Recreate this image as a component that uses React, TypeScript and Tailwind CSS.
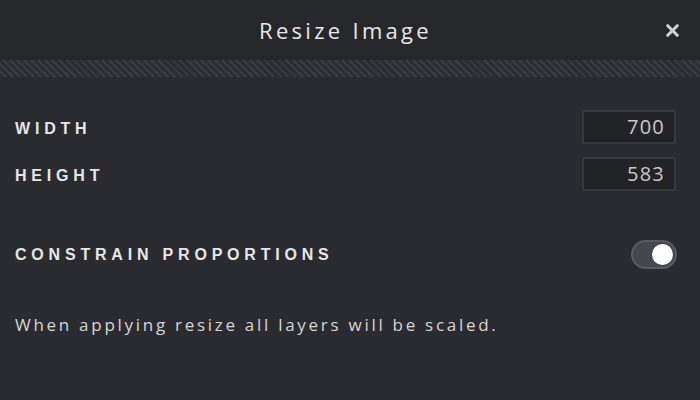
import { X } from 'lucide-react';

function NumberField({ value }: { value: string }) {
  return (
    <div className="flex h-[34px] w-[94px] items-center justify-end rounded-[2px] border-2 border-[#37383d] bg-[#222327] pr-[9px] text-[20px] tracking-[0.06em] text-[#c9c9c9] [font-family:'Open_Sans',sans-serif]">
      {value}
    </div>
  );
}

function Toggle({ on }: { on: boolean }) {
  return (
    <div className="flex h-[29px] w-[46px] items-center rounded-full border-2 border-[#5a5b60] bg-[#46474c] px-[2px]">
      <div className={`h-[21px] w-[21px] rounded-full bg-white ${on ? 'ml-auto' : ''}`} />
    </div>
  );
}

export default function App() {
  const label = "text-[16px] font-bold tracking-[0.3em] text-[#e6e6e6] [font-family:'Liberation_Sans',sans-serif]";

  return (
    <div className="flex h-[400px] w-[700px] flex-col bg-[#2a2b30]">
      {/* title bar */}
      <div className="relative flex h-[60px] items-center justify-center bg-[#26272b]">
        <h1 className="pr-[9px] text-[22px] tracking-[0.15em] text-[#e8e8e8] [font-family:'Open_Sans',sans-serif]">
          Resize Image
        </h1>
        <button className="absolute right-[18px] top-[21px] text-[#cfcfcf]">
          <X size={19} strokeWidth={4} />
        </button>
      </div>
      <div className="h-[17px] bg-[repeating-linear-gradient(45deg,#2c2d32_0px,#2c2d32_3px,#3b3c41_3px,#3b3c41_5px)]" />

      {/* form */}
      <div className="flex flex-col pl-[15px] pr-[24px] pt-[33px]">
        <div className="flex items-center justify-between">
          <span className={`${label} pt-[3px]`}>WIDTH</span>
          <NumberField value="700" />
        </div>
        <div className="mt-[13px] flex items-center justify-between">
          <span className={`${label} pt-[3px]`}>HEIGHT</span>
          <NumberField value="583" />
        </div>
        <div className="mt-[49px] flex items-center justify-between">
          <span className={label}>CONSTRAIN PROPORTIONS</span>
          <div className="-mr-[1px]">
            <Toggle on />
          </div>
        </div>
        <p className="mt-[43px] text-[17px] tracking-[0.16em] text-[#d6d6d6] [font-family:'Open_Sans',sans-serif]">
          When applying resize all layers will be scaled.
        </p>
      </div>
    </div>
  );
}
